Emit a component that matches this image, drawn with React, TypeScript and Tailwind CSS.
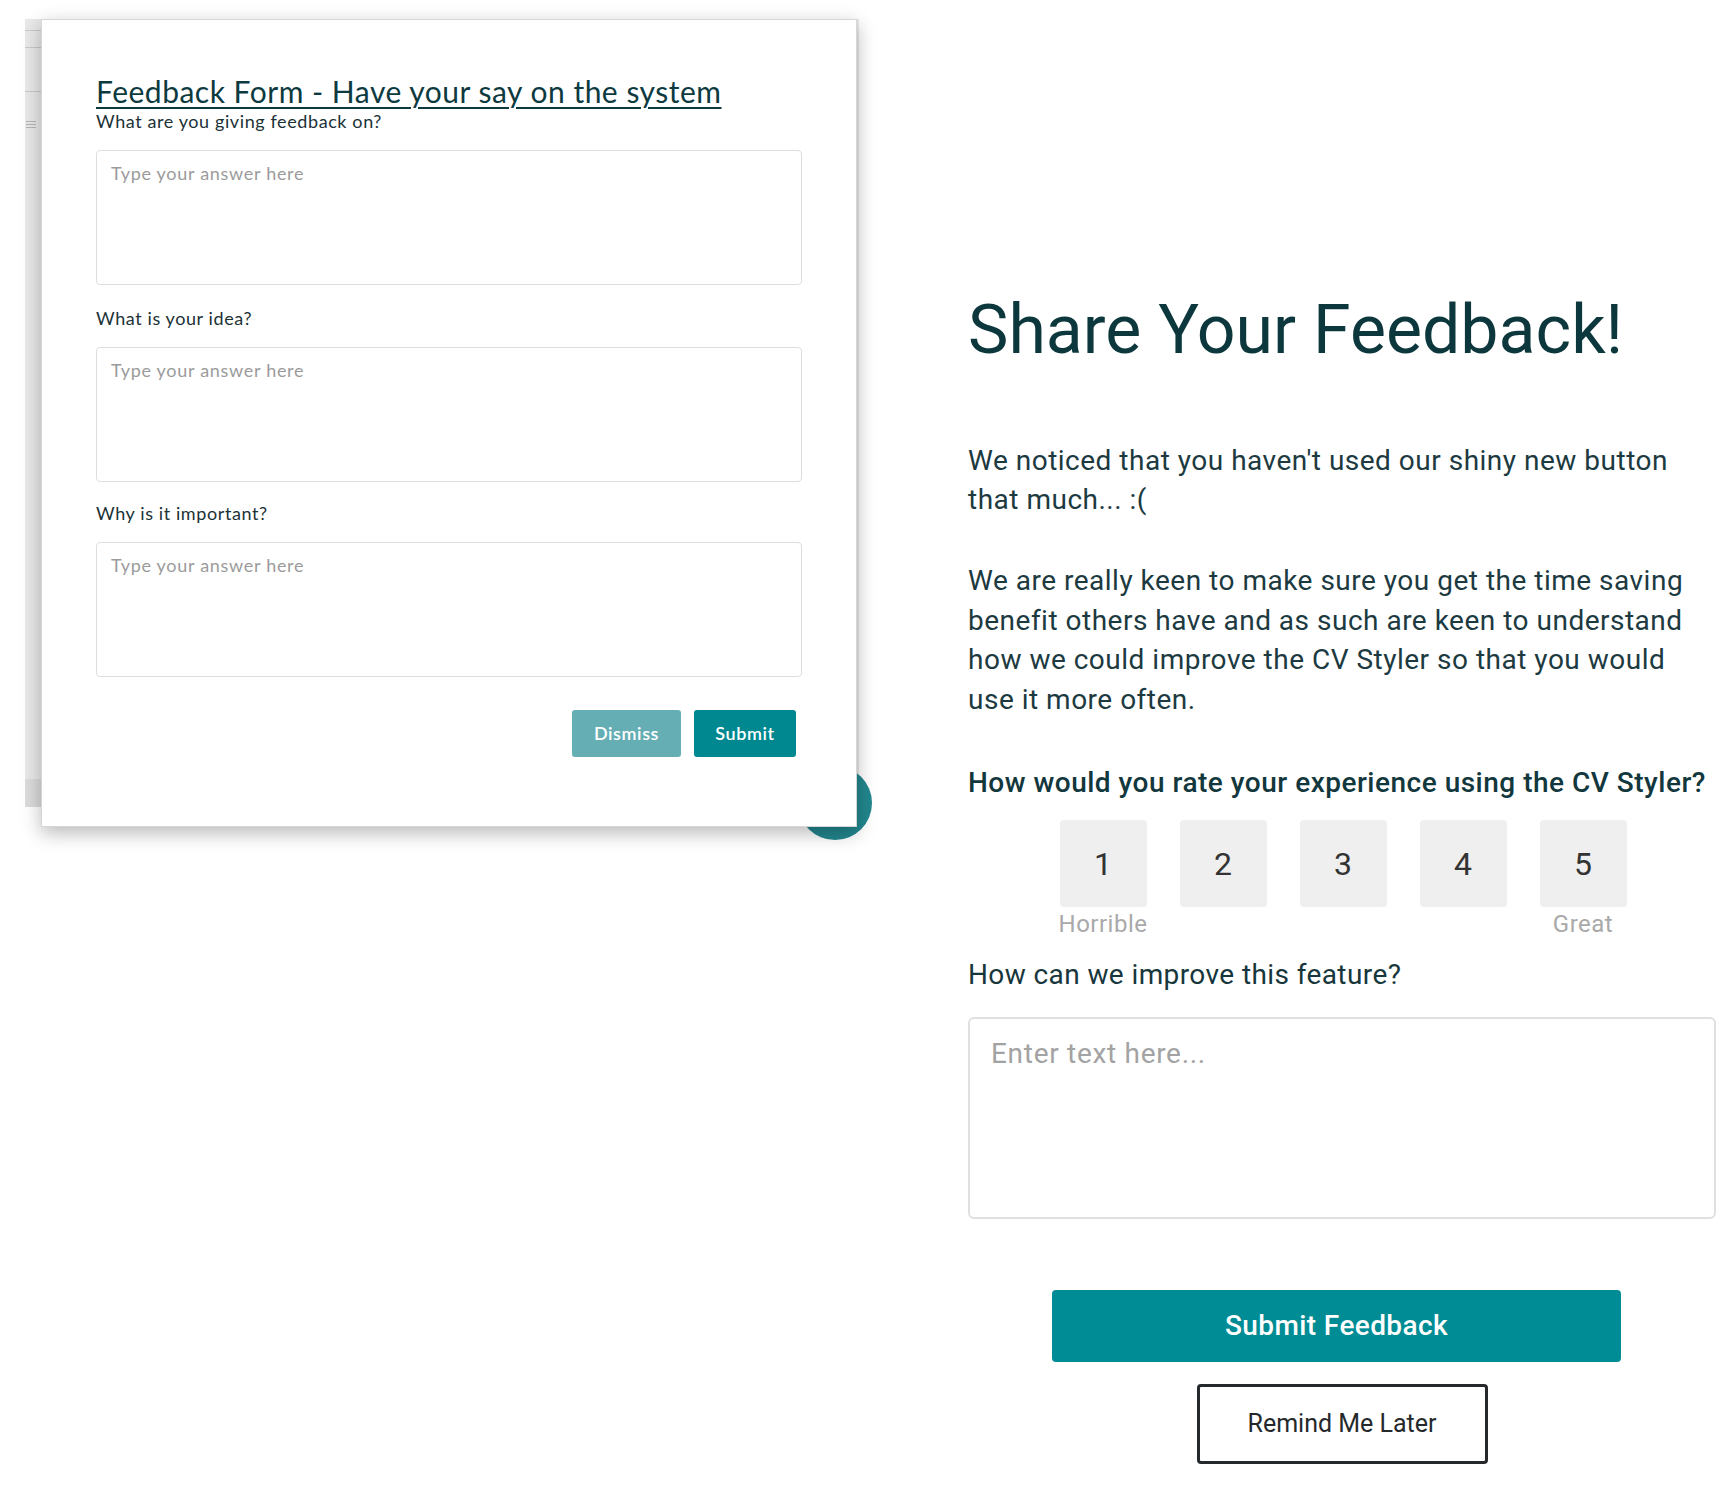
import React from "react";

function CardField({ label, mt }: { label: string; mt: string }) {
  return (
    <>
      <div className={`${mt} text-[18px] leading-[22px] tracking-[0.6px] text-[#1b3236] font-['Lato',sans-serif]`}>{label}</div>
      <textarea
        readOnly
        placeholder="Type your answer here"
        className="mt-[18px] block w-full h-[135px] resize-none rounded-[4px] border border-[#dedede] bg-white px-[14px] py-[11px] text-[18px] leading-[22px] tracking-[0.7px] font-['Lato',sans-serif] placeholder:text-[#9b9b9b] outline-none"
      />
    </>
  );
}

export default function App() {
  return (
    <div className="w-[1725px] h-[1500px] bg-white flex overflow-hidden">
      {/* Left: feedback form card over a window */}
      <div className="w-[900px] shrink-0 pt-[13px] pl-[25px]">
        <div className="relative w-[850px]">
          <div className="absolute left-0 top-0 w-[834px] h-[788px] bg-[#e9e9e9]">
            <div className="absolute left-0 top-[11px] w-[16px] h-px bg-[#c9c9c9]" />
            <div className="absolute left-0 top-[28px] w-[16px] h-px bg-[#c9c9c9]" />
            <div className="absolute left-0 top-[72px] w-[16px] h-px bg-[#c9c9c9]" />
            <div className="absolute left-[1px] top-[102px] w-[10px] flex flex-col gap-[2px]">
              <div className="h-px bg-[#b5b5b5]" />
              <div className="h-px bg-[#b5b5b5]" />
              <div className="h-px bg-[#b5b5b5]" />
            </div>
            <div className="absolute left-0 top-[760px] w-[16px] h-[28px] bg-[#dcdcdc]" />
          </div>
          <div className="absolute left-[773px] top-[747px] w-[74px] h-[74px] rounded-full bg-[#22878e]" />
          <div className="relative z-10 ml-[16px] mt-[6px] w-[816px] h-[808px] bg-white shadow-[0_6px_18px_rgba(0,0,0,0.28)] px-[54px] pt-[54px] border border-[#d6d6d6]">
            <h1 className="text-[30px] leading-[34px] tracking-[0.5px] text-[#0d3a3f] underline decoration-[2px] underline-offset-[4px] font-['Lato',sans-serif] whitespace-nowrap">
              Feedback Form - Have your say on the system
            </h1>
            <CardField label="What are you giving feedback on?" mt="mt-[2px]" />
            <CardField label="What is your idea?" mt="mt-[22px]" />
            <CardField label="Why is it important?" mt="mt-[20px]" />
            <div className="mt-[33px] flex justify-end gap-[13px] pr-[6px]">
              <button className="w-[109px] h-[47px] rounded-[3px] bg-[#65aeb4] text-white text-[18px] tracking-[0.6px] font-semibold font-['Lato',sans-serif]">
                Dismiss
              </button>
              <button className="w-[102px] h-[47px] rounded-[3px] bg-[#008891] text-white text-[18px] tracking-[0.6px] font-semibold font-['Lato',sans-serif]">
                Submit
              </button>
            </div>
          </div>
        </div>
      </div>

      {/* Right: Share your feedback */}
      <div className="ml-[68px] w-[748px] shrink-0 pt-[288px] font-['Roboto',sans-serif] text-[#1c3a3f]">
        <h2 className="text-[68px] leading-[84px] font-normal text-[#0c373c] whitespace-nowrap">Share Your Feedback!</h2>
        <p className="mt-[69px] text-[28px] leading-[39px] tracking-[0.5px] whitespace-nowrap">
          We noticed that you haven't used our shiny new button
          <br />
          that much... :(
        </p>
        <p className="mt-[42px] text-[28px] leading-[39.5px] tracking-[0.5px] whitespace-nowrap">
          We are really keen to make sure you get the time saving
          <br />
          benefit others have and as such are keen to understand
          <br />
          how we could improve the CV Styler so that you would
          <br />
          use it more often.
        </p>
        <div className="mt-[44px] text-[28px] leading-[39px] tracking-[0.5px] font-medium text-[#12373c] whitespace-nowrap">
          How would you rate your experience using the CV Styler?
        </div>
        <div className="mt-[18px] flex justify-center gap-[33px] pl-[2px]">
          {[1, 2, 3, 4, 5].map((n) => (
            <div key={n} className="flex flex-col items-center w-[87px]">
              <div className="w-[87px] h-[87px] rounded-[4px] bg-[#efefef] flex items-center justify-center text-[32px] text-[#333333]">
                {n}
              </div>
              <div className="mt-[3px] h-[28px] text-[24px] leading-[28px] tracking-[0.5px] text-[#a9a9a9] whitespace-nowrap">
                {n === 1 ? "Horrible" : n === 5 ? "Great" : ""}
              </div>
            </div>
          ))}
        </div>
        <div className="mt-[17px] text-[28px] leading-[39px] tracking-[0.4px] text-[#17373c]">How can we improve this feature?</div>
        <textarea
          readOnly
          placeholder="Enter text here..."
          className="mt-[23px] block w-full h-[202px] resize-none rounded-[6px] border-2 border-[#e0e0e0] bg-white px-[21px] py-[19px] text-[28px] leading-[32px] tracking-[0.7px] font-['Roboto',sans-serif] placeholder:text-[#a3a3a3] outline-none"
        />
        <div className="mt-[71px] flex flex-col items-center">
          <button className="mr-[11px] w-[569px] h-[72px] rounded-[4px] bg-[#008c95] text-white text-[28px] tracking-[0.4px] font-medium">
            Submit Feedback
          </button>
          <button className="mt-[22px] w-[291px] h-[80px] rounded-[4px] border-[3px] border-[#26292b] bg-white text-[#26292b] text-[25px]">
            Remind Me Later
          </button>
        </div>
      </div>
    </div>
  );
}
